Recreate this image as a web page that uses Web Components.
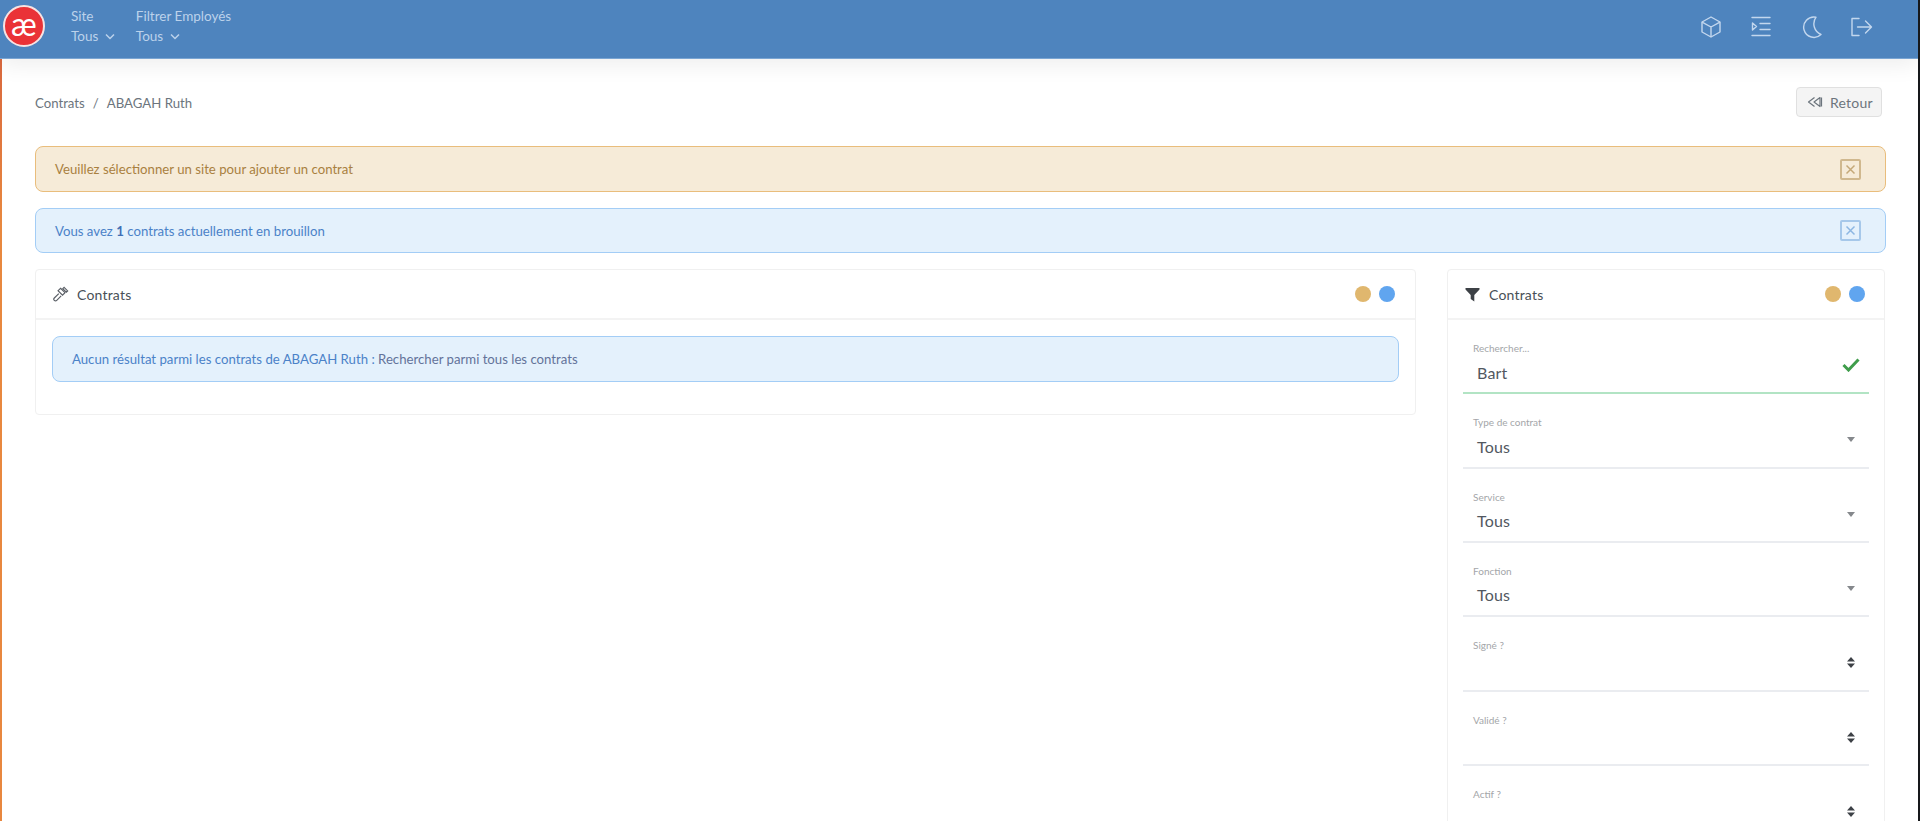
<!DOCTYPE html>
<html lang="fr">
<head>
<meta charset="utf-8">
<title>Contrats</title>
<style>
  html, body { margin: 0; height: 100%; overflow: hidden; background: #fff; }
  body { font-family: Lato, "Liberation Sans", sans-serif; color: #495057; }
</style>
</head>
<body>
<app-shell>
  <app-navbar slot="nav">
    <nav-filter label="Site" value="Tous"></nav-filter>
    <nav-filter label="Filtrer Employés" value="Tous"></nav-filter>
  </app-navbar>
  <page-head><span>Contrats</span><span>ABAGAH Ruth</span></page-head>
  <app-alert variant="warning">Veuillez sélectionner un site pour ajouter un contrat</app-alert>
  <app-alert variant="info">Vous avez <b>1</b> contrats actuellement en brouillon</app-alert>
  <page-columns>
    <app-card heading="Contrats" icon="gavel">
      <app-alert variant="info" inner>Aucun résultat parmi les contrats de ABAGAH Ruth : <span style="color:#63739a">Rechercher parmi tous les contrats</span></app-alert>
    </app-card>
    <app-card slot="side" heading="Contrats" icon="filter" flush>
      <filter-field label="Rechercher..." value="Bart" icon="check" valid></filter-field>
      <filter-field label="Type de contrat" value="Tous" icon="caret"></filter-field>
      <filter-field label="Service" value="Tous" icon="caret"></filter-field>
      <filter-field label="Fonction" value="Tous" icon="caret"></filter-field>
      <filter-field label="Signé ?" icon="sort"></filter-field>
      <filter-field label="Validé ?" icon="sort"></filter-field>
      <filter-field label="Actif ?" icon="sort"></filter-field>
    </app-card>
  </page-columns>
</app-shell>

<script>
const icons = {
  cube: `<path d="M12 2l9 5v10l-9 5-9-5V7z"/><path d="M3.500 7.300L12 12l8.500-4.700M12 12v9.500"/>`,
  indent: `<path d="M3 2.500h18M11 8.500h10M11 14.500h10M3 20.500h18"/><path d="M3.500 8l4 3.500-4 3.500z"/>`,
  moon: `<path d="M17 2.200a10.200 10.200 0 1 0 5 17.300A11.500 11.500 0 0 1 17 2.200z"/>`,
  logout: `<path d="M10 3.500H3v17h7"/><path d="M8.500 12h13.500M16.500 6l6 6-6 6"/>`,
  rewind: `<path d="M7.500 3.500L1.500 8l6 4.500M13 3.500L7 8l6 4.500z"/><path d="M14.500 3.500v9"/>`,
  gavel: `<path d="M8.500 2.500l5 5-2.800 2.800-5-5z"/><path d="M6.500 8.500l-5 5a1.800 1.800 0 0 0 2.700 2.700l5-5"/><path d="M12.500 1.500l4 4-1.500 1.500-4-4z"/>`
};

class AppShell extends HTMLElement {
  constructor() {
    super();
    this.attachShadow({ mode: "open" }).innerHTML = `
      <style>
        :host { display: flex; flex-direction: column; height: 821px; overflow: hidden; border-right: 2px solid #16181b; box-sizing: border-box; }
        main { flex: 1; min-height: 0; overflow: hidden; padding: 0 32px 0 33px;
          border-left: 2px solid; border-image: linear-gradient(#d9683e, #e8883f 22%, #e8873f) 1; }
      </style>
      <slot name="nav"></slot>
      <main><slot></slot></main>`;
  }
}

class AppNavbar extends HTMLElement {
  constructor() {
    super();
    const buttons = ["cube", "indent", "moon", "logout"].map(n =>
      `<svg viewBox="0 0 24 24" width="24" height="24">${icons[n]}</svg>`).join("");
    this.attachShadow({ mode: "open" }).innerHTML = `
      <style>
        :host { display: flex; align-items: center; position: relative; z-index: 2; height: 59px; box-sizing: border-box;
          background: #4e84be; border-bottom: 1px solid #7aa5d3; box-shadow: 0 6px 22px rgba(0,0,0,.07); padding: 0 45px 0 3px; }
        .logo { width: 38px; height: 38px; align-self: flex-start; margin-top: 5px; border: 2px solid #f6e3e3; border-radius: 50%; background: #ea3237; color: #fff;
          display: grid; place-items: center; font: 400 32px/1 Lato, sans-serif; flex: none; }
        .logo span { margin-top: -4px; }
        .filters { display: flex; gap: 21px; margin-left: 26px; flex: 1; }
        .actions { display: flex; gap: 26px; margin-top: -4px; }
        svg { fill: none; stroke: #c3d7ee; stroke-width: 1.400; stroke-linejoin: round; stroke-linecap: round; }
      </style>
      <div class="logo"><span>æ</span></div>
      <div class="filters"><slot></slot></div>
      <div class="actions">${buttons}</div>`;
  }
}

class NavFilter extends HTMLElement {
  connectedCallback() {
    this.attachShadow({ mode: "open" }).innerHTML = `
      <style>
        :host { display: block; color: #bcd2eb; font-size: 13.500px; line-height: 20px; margin-top: -6px; }
        svg { fill: none; stroke: currentColor; stroke-width: 1.500; margin-left: 3px; vertical-align: 1px; }
      </style>
      <div>${this.getAttribute("label")}</div>
      <div>${this.getAttribute("value")} <svg width="10" height="7" viewBox="0 0 10 7"><path d="M1 1.500l4 4 4-4"/></svg></div>`;
  }
}

class PageHead extends HTMLElement {
  constructor() {
    super();
    this.attachShadow({ mode: "open" }).innerHTML = `
      <style>
        :host { display: flex; align-items: center; justify-content: space-between; height: 30px; margin: 28px 4px 29px 0; font-size: 13.200px; color: #6c757d; }
        .crumbs { display: flex; padding-top: 2px; }
        ::slotted(span:not(:first-child))::before { content: "/"; padding: 0 8px; color: #6c757d; }
        button { display: flex; align-items: center; gap: 7px; height: 30px; width: 86px; padding: 0 0 0 10px; box-sizing: border-box; background: #f4f4f4;
          border: 1px solid #e0e0e0; border-radius: 4px; font: 14px Lato, sans-serif; color: #6c757d; letter-spacing: .2px; }
        svg { fill: none; stroke: #6c757d; stroke-width: 1.200; stroke-linejoin: round; }
      </style>
      <div class="crumbs"><slot></slot></div>
      <button><svg width="16" height="16" viewBox="0 0 16 16">${icons.rewind}</svg>Retour</button>`;
  }
}

class AppAlert extends HTMLElement {
  connectedCallback() {
    const warning = this.getAttribute("variant") === "warning";
    const inner = this.hasAttribute("inner");
    const close = `<i><svg width="11" height="11" viewBox="0 0 11 11"><path d="M1.500 1.500l8 8M9.500 1.500l-8 8"/></svg></i>`;
    this.attachShadow({ mode: "open" }).innerHTML = `
      <style>
        :host { display: block; margin-bottom: 16px; }
        article { display: flex; align-items: center; justify-content: space-between; box-sizing: border-box; height: ${inner ? 46 : warning ? 46 : 45}px;
          padding: 0 24px 0 19px; border-radius: 8px; font-size: 13.200px;
          background: ${warning ? "#f6ebd8" : "#e4f1fc"}; border: 1px solid ${warning ? "#e9bd7c" : "#a3cdf6"}; color: ${warning ? "#a9803f" : "#4b82c8"}; }
        ::slotted(b) { color: #3f6fb5; }
        i { display: grid; place-items: center; width: 21px; height: 21px; box-sizing: border-box; border-radius: 2px;
          border: 2px solid ${warning ? "#d0b88e" : "#a6c8ea"}; }
        svg { fill: none; stroke-width: 1.500; stroke: ${warning ? "#c4a878" : "#8db7e2"}; }
      </style>
      <article><div><slot></slot></div>${inner ? "" : close}</article>`;
  }
}

class PageColumns extends HTMLElement {
  constructor() {
    super();
    this.attachShadow({ mode: "open" }).innerHTML = `
      <style>
        :host { display: grid; grid-template-columns: 1381px 438px; gap: 31px; margin-right: 0; }
      </style>
      <slot></slot><slot name="side"></slot>`;
  }
}

class AppCard extends HTMLElement {
  connectedCallback() {
    const filter = this.getAttribute("icon") === "filter";
    const icon = filter
      ? `<svg width="15" height="15" viewBox="0 0 15 15"><path fill="#3d4146" d="M.5 1h14v1.500L9.300 8v6.500L5.700 12V8L.5 2.500z"/></svg>`
      : `<svg class="line" width="16" height="16" viewBox="0 0 18 18">${icons.gavel}</svg>`;
    this.attachShadow({ mode: "open" }).innerHTML = `
      <style>
        :host { display: block; align-self: start; background: #fff; border: 1px solid #f0f0f0; border-radius: 4px; }
        header { display: flex; align-items: center; height: 48px; padding: 0 ${filter ? 19 : 20}px 0 17px; border-bottom: 2px solid #f3f3f3; font-size: 14px; color: #495057; }
        h2 { flex: 1; margin: 0 0 0 ${filter ? 9 : 8}px; font: 400 14px Lato, sans-serif; letter-spacing: .2px; }
        .dot { width: 16px; height: 16px; border-radius: 50%; margin-left: 8px; background: #e0b76e; }
        .dot + .dot { background: #60a5ef; }
        .line { fill: none; stroke: #5a5f66; stroke-width: 1.300; }
        section { padding: ${this.hasAttribute("flush") ? "0 15px" : "16px 16px 16px 16px"}; }
      </style>
      <header>${icon}<h2>${this.getAttribute("heading")}</h2><span class="dot"></span><span class="dot"></span></header>
      <section><slot></slot></section>`;
  }
}

class FilterField extends HTMLElement {
  connectedCallback() {
    const marks = {
      check: `<svg width="18" height="14" viewBox="0 0 18 14"><path fill="none" stroke="#3f9d4b" stroke-width="3" d="M1.500 7l5 5L16.500 1.500"/></svg>`,
      caret: `<svg width="8" height="5" viewBox="0 0 8 5"><path fill="#85888c" d="M0 0h8L4 5z"/></svg>`,
      sort: `<svg width="8" height="11" viewBox="0 0 8 11"><path fill="#3d4146" d="M4 0l4 4.500H0zM4 11L0 6.500h8z"/></svg>`
    };
    const kind = this.getAttribute("icon");
    this.attachShadow({ mode: "open" }).innerHTML = `
      <style>
        :host { display: grid; grid-template-columns: 1fr 24px; grid-template-rows: 12px 24px; align-content: start; box-sizing: border-box; height: 74.330px;
          padding: 22px 6px 0 10px; border-bottom: 2px solid ${this.hasAttribute("valid") ? "#b2e4c4" : "#eaecf0"}; }
        label { grid-column: 1; font-size: 10px; line-height: 12px; color: #a4a6a9; }
        div { grid-column: 1; margin: 6.500px 0 0 4px; font-size: 16px; line-height: 24px; color: #52585f; letter-spacing: .2px; }
        span { grid-column: 2; grid-row: 1 / 3; justify-self: center; align-self: start; margin-top: ${kind === "check" ? 16 : kind === "sort" ? 18 : 20}px; line-height: 0; }
      </style>
      <label>${this.getAttribute("label")}</label>
      <div>${this.getAttribute("value") || ""}</div>
      <span>${marks[kind]}</span>`;
  }
}

customElements.define("app-shell", AppShell);
customElements.define("app-navbar", AppNavbar);
customElements.define("nav-filter", NavFilter);
customElements.define("page-head", PageHead);
customElements.define("app-alert", AppAlert);
customElements.define("page-columns", PageColumns);
customElements.define("app-card", AppCard);
customElements.define("filter-field", FilterField);
</script>
</body>
</html>
